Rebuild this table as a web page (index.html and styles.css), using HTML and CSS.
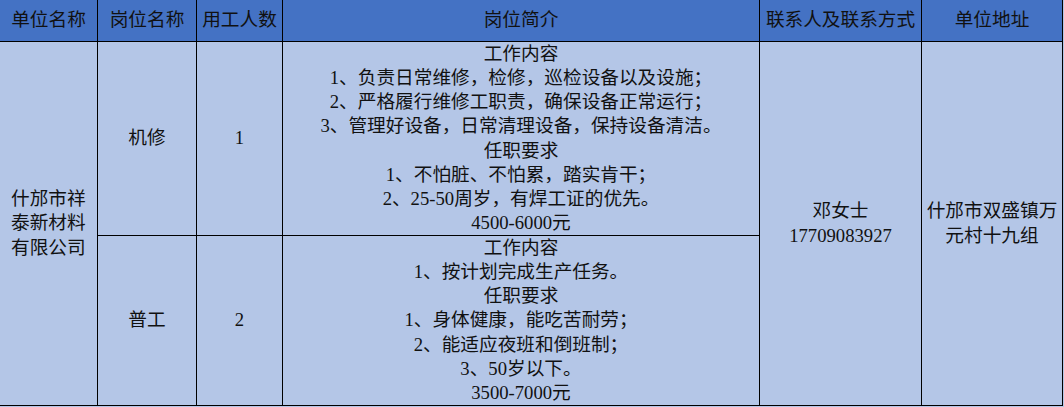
FILE: index.html
```html
<!DOCTYPE html>
<html lang="zh-CN">
<head>
<meta charset="utf-8">
<title>招聘信息</title>
<link rel="stylesheet" href="styles.css">
</head>
<body>
<div class="sheet">
  <div class="cell head">单位名称</div>
  <div class="cell head">岗位名称</div>
  <div class="cell head">用工人数</div>
  <div class="cell head">岗位简介</div>
  <div class="cell head">联系人及联系方式</div>
  <div class="cell head">单位地址</div>

  <div class="cell body span2 company">什邡市祥泰新材料有限公司</div>
  <div class="cell body">机修</div>
  <div class="cell body">1</div>
  <div class="cell body desc">
    <div>工作内容</div>
    <div>1、负责日常维修，检修，巡检设备以及设施；</div>
    <div>2、严格履行维修工职责，确保设备正常运行；</div>
    <div>3、管理好设备，日常清理设备，保持设备清洁。</div>
    <div>任职要求</div>
    <div>1、不怕脏、不怕累，踏实肯干；</div>
    <div>2、25-50周岁，有焊工证的优先。</div>
    <div>4500-6000元</div>
  </div>
  <div class="cell body span2 contact">
    <div>邓女士</div>
    <div>17709083927</div>
  </div>
  <div class="cell body span2 address">什邡市双盛镇万元村十九组</div>

  <div class="cell body">普工</div>
  <div class="cell body">2</div>
  <div class="cell body desc">
    <div>工作内容</div>
    <div>1、按计划完成生产任务。</div>
    <div>任职要求</div>
    <div>1、身体健康，能吃苦耐劳；</div>
    <div>2、能适应夜班和倒班制；</div>
    <div>3、50岁以下。</div>
    <div>3500-7000元</div>
  </div>
</div>
</body>
</html>
```
FILE: styles.css
```css
html, body {
  margin: 0;
  padding: 0;
  background: #b4c6e7;
}

body {
  font-family: "Liberation Serif", "Noto Sans CJK SC", serif;
  font-size: 18.67px;
  color: #111;
}

.sheet {
  display: grid;
  grid-template-columns: 97px 98px 85px 476px 161px 140px;
  grid-template-rows: 41px 193px 169px;
  gap: 1px;
  width: max-content;
  background: #000;
  border-right: 1px solid #000;
  border-bottom: 1px solid #000;
}

.cell {
  display: flex;
  flex-direction: column;
  justify-content: center;
  align-items: center;
  text-align: center;
  line-height: 24.2px;
  overflow: hidden;
}

.head {
  background: #4472c4;
  color: #111;
  white-space: nowrap;
}

.body {
  background: #b4c6e7;
}

.span2 {
  grid-row: span 2;
}

.company {
  padding: 0 11px;
  text-align: left;
}

.address {
  padding: 0 4px;
}

.desc {
  white-space: nowrap;
}
```
